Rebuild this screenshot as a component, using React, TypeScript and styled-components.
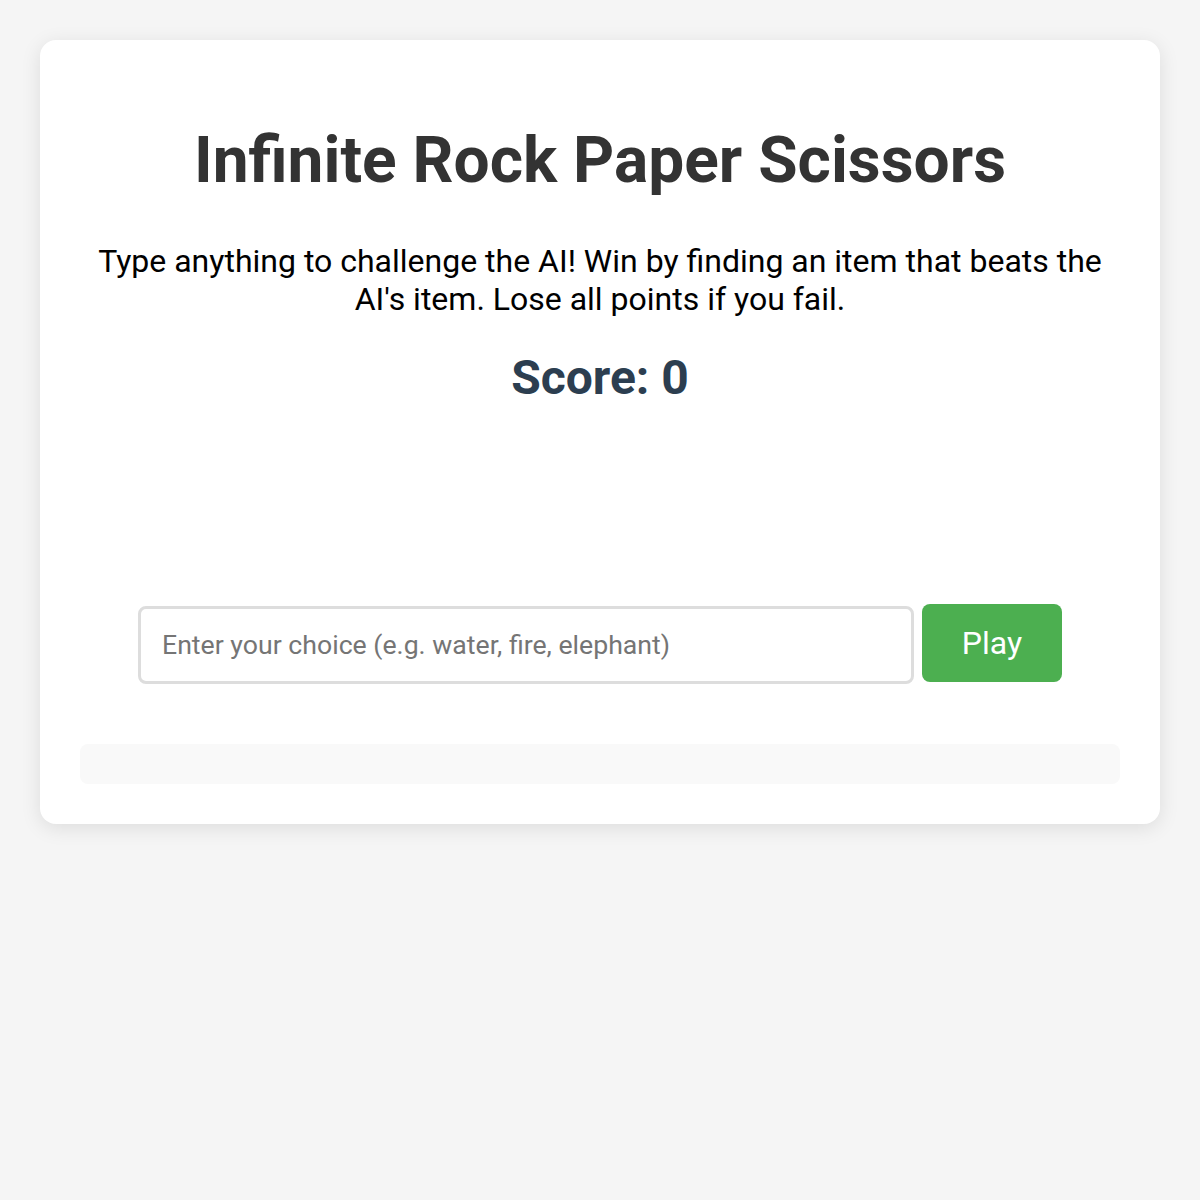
import React, { useState } from "react";
import styled, { createGlobalStyle } from "styled-components";

const GlobalStyle = createGlobalStyle`
  html, body {
    margin: 0;
    padding: 0;
    background: #f5f5f5;
  }
  body {
    font-family: Roboto, "Liberation Sans", Arial, sans-serif;
  }
  * { box-sizing: border-box; }
`;

const Page = styled.div`
  padding: 40px;
`;

const Card = styled.div`
  background: #ffffff;
  border-radius: 16px;
  box-shadow: 0 4px 20px rgba(0, 0, 0, 0.1);
  padding: 40px;
  display: flex;
  flex-direction: column;
  align-items: stretch;
  text-align: center;
`;

const Title = styled.h1`
  margin: 43px 0 44px;
  font-size: 64px;
  line-height: 75px;
  font-weight: 700;
  color: #333333;
`;

const Intro = styled.p`
  margin: 0;
  font-size: 32px;
  line-height: 38px;
  color: #000000;
`;

const Score = styled.div`
  margin-top: 32px;
  font-size: 48px;
  line-height: 56px;
  font-weight: 700;
  color: #2c3e50;
`;

const ResultArea = styled.div`
  height: 198px;
`;

const InputRow = styled.form`
  display: flex;
  justify-content: center;
  align-items: baseline;
  gap: 8px;
`;

const ChoiceInput = styled.input`
  width: 776px;
  height: 78px;
  padding: 0 21px;
  border: 3px solid #dddddd;
  border-radius: 8px;
  font-family: Roboto, "Liberation Sans", Arial, sans-serif;
  font-size: 26.67px;
  color: #333;
  outline: none;
  &::placeholder {
    color: #757575;
  }
`;

const PlayButton = styled.button`
  width: 140px;
  height: 78px;
  border: none;
  border-radius: 8px;
  background: #4caf50;
  color: #ffffff;
  font-family: Roboto, "Liberation Sans", Arial, sans-serif;
  font-size: 32px;
  cursor: pointer;
`;

const History = styled.div`
  margin-top: 60px;
  height: 40px;
  background: #f9f9f9;
  border-radius: 8px;
`;

export default function App() {
  const [value, setValue] = useState("");
  return (
    <>
      <GlobalStyle />
      <Page>
        <Card>
          <Title>Infinite Rock Paper Scissors</Title>
          <Intro>
            Type anything to challenge the AI! Win by finding an item that beats the AI's item. Lose all
            points if you fail.
          </Intro>
          <Score>Score: 0</Score>
          <ResultArea />
          <InputRow onSubmit={(e) => e.preventDefault()}>
            <ChoiceInput
              value={value}
              onChange={(e) => setValue(e.target.value)}
              placeholder="Enter your choice (e.g. water, fire, elephant)"
            />
            <PlayButton type="submit">Play</PlayButton>
          </InputRow>
          <History />
        </Card>
      </Page>
    </>
  );
}
